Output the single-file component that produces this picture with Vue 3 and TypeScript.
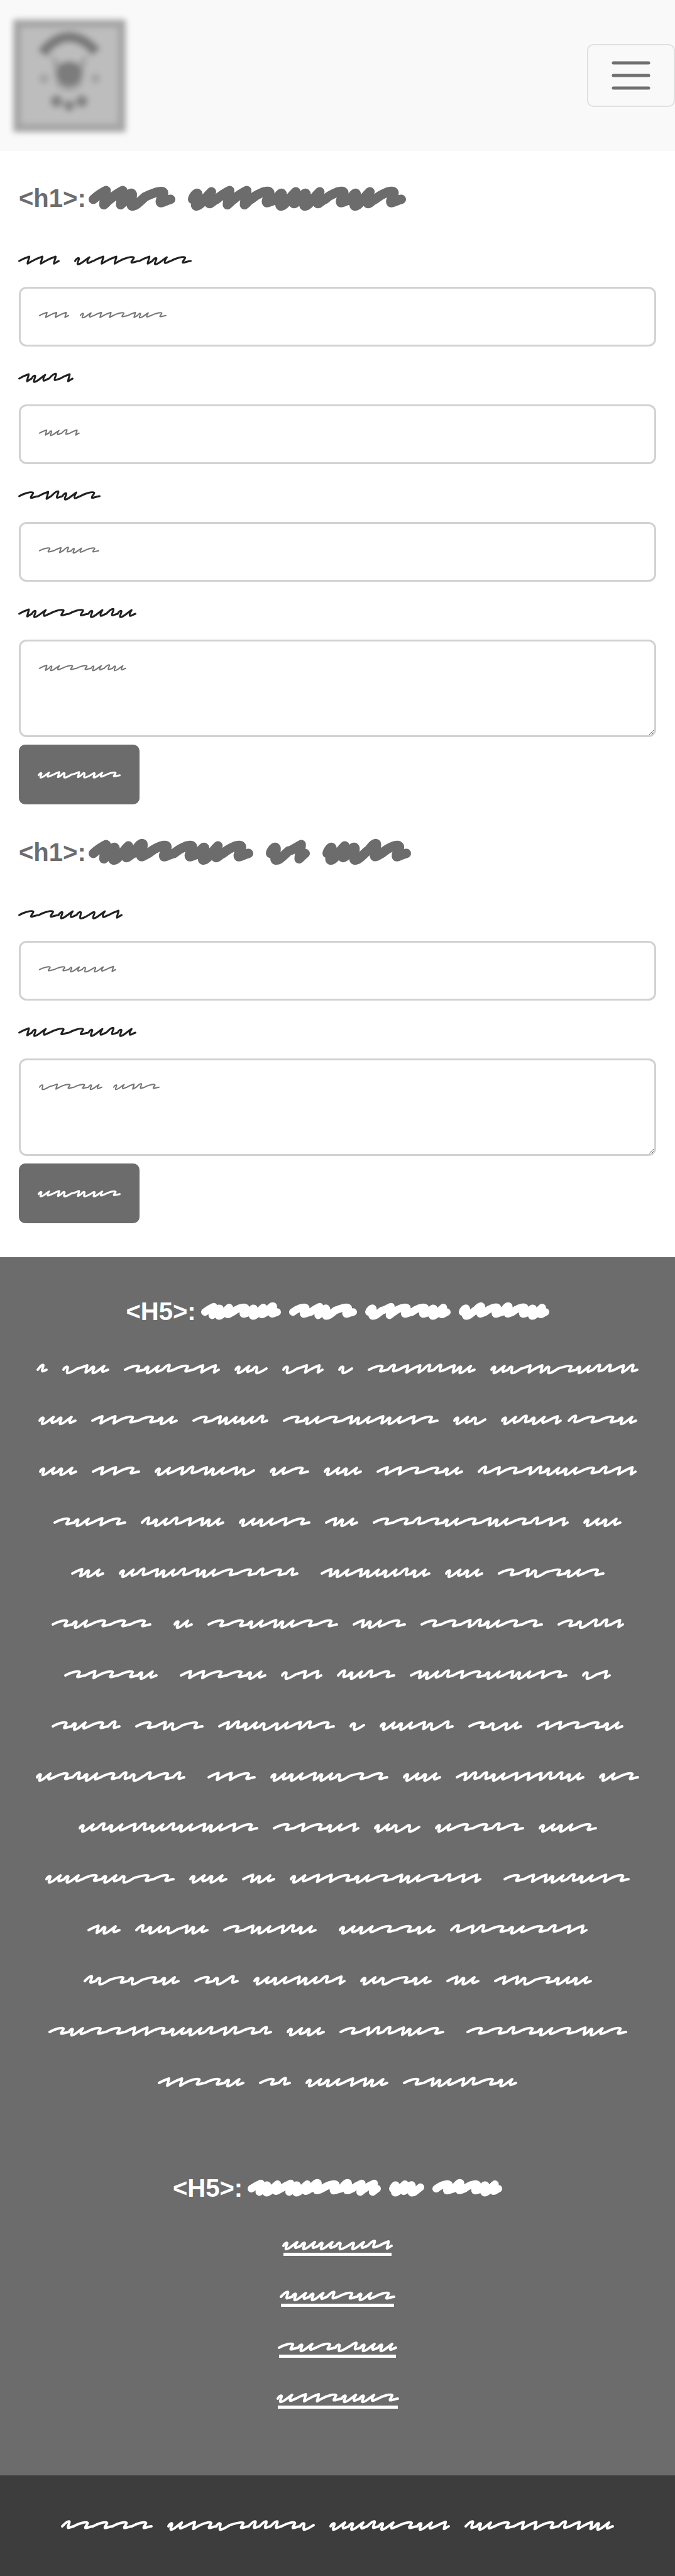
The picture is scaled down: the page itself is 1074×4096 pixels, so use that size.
<script setup lang="ts">
import { defineComponent, h } from 'vue'

type Point = number[]
interface Stroke { width: number; curves: Point[] }

// Pen movements of the scribble lettering. Each curve is a cubic segment
// (x1, y1, x2, y2, x, y) measured from the start of its letter.
const strokes: Record<string, Stroke> = {
  n: { width: 30, curves: [[5, -1, 14, -4, 23, -6], [24, -5, 18, 4, 19, 5.3], [21, 5, 25, 2.4, 30, 1]] },
  i: { width: 27, curves: [[3, -1, 12, -8, 17, -6.6], [19, -5, 11, 2, 14, 3.4], [16, 4, 21, 2, 27, 1]] },
  r: { width: 46, curves: [[10, -3, 29, -7, 33, -4.6], [35, -3, 25, 2, 28, 3.6], [30, 4, 38, 1.6, 46, 1]] },
  u: { width: 42, curves: [[1, -1.4, 8, -5.4, 9, -3.2], [10, -1, 3, 5, 6, 6.2], [13, 7, 23, -1, 33, -5], [32, -4, 26, 2, 29, 4.2], [31, 5, 36, 2, 42, 1]] },
  v: { width: 33, curves: [[1, -1.4, 8, -5.4, 10, -3.2], [11, -1, 6, 5, 9, 6.2], [15, 7, 23, 3, 33, -1]] },
}

const unit = 0.685

function trace(code: string, width: number, pen: number, rise: number): string {
  const letters = code.split('').map((c) => strokes[c])
  const total = letters.reduce((sum, l) => sum + l.width, 0)
  const k = (width - pen) / total
  const mid = 12
  let x = 0
  let d = `M${pen / 2} ${mid + rise}`
  for (const letter of letters) {
    for (const c of letter.curves) {
      const pts = c.map((v, n) => (n % 2 === 0 ? pen / 2 + (x + v) * k : mid + v * rise).toFixed(1))
      d += ` C${pts.join(' ')}`
    }
    x += letter.width
  }
  return d
}

// Draws a line of scribbled words. A word is written "letters:width";
// a leading "+" widens the gap before it and "-" tightens it.
const Scribble = defineComponent({
  props: {
    words: { type: String, required: true },
    pen: { type: Number, default: 4 },
    rise: { type: Number, default: 1 },
  },
  setup(props) {
    return () =>
      h('span', { class: 'scribble', 'aria-hidden': 'true' }, props.words.split(' ').map((word) => {
        const wide = word[0] === '+'
        const tight = word[0] === '-'
        const [code, size] = word.replace(/^[+-]/, '').split(':')
        const width = Math.round(Number(size) * unit)
        return h('svg', { class: { word: true, wide, tight }, width, height: 24, viewBox: `0 0 ${width} 24` }, [
          h('path', { d: trace(code, width, props.pen, props.rise), 'stroke-width': props.pen }),
        ])
      }))
  },
})

interface Field { id: string; label: string; hint: string; area?: boolean }
interface Form { id: string; title: string; fields: Field[]; submit: string }

const forms: Form[] = [
  {
    id: 'first',
    title: 'nnvr:202 unnruurur:506',
    submit: 'unvnvur:192',
    fields: [
      { id: 'a1', label: 'nnn:96 unnrnur:273', hint: 'nnn:70 unnrnur:202' },
      { id: 'a2', label: 'nuin:129', hint: 'nuin:95' },
      { id: 'a3', label: 'rniur:191', hint: 'rniur:140' },
      { id: 'a4', label: 'nurruiu:275', hint: 'nurruiu:203', area: true },
    ],
  },
  {
    id: 'second',
    title: 'nuirrur:382 vn:102 uvir:206',
    submit: 'unvnvur:192',
    fields: [
      { id: 'b1', label: 'rruvun:242', hint: 'rruvun:179' },
      { id: 'b2', label: 'nurruiu:275', hint: 'vnrru:148 unir:108', area: true },
    ],
  },
]

const about = [
  'i:26 vnu:109 ruirnn:223 uv:78 vnn:97 v:35 rinniinu:251 uvnnvruiini:345',
  'uu:89 nnrru:201 rnuui:177 rurnununr:362 uv:78 uiun:142 -irru:162',
  'uu:89 nnr:113 uninunv:233 ur:92 uu:89 nnrru:202 inrniuurinn:369',
  'runr:170 iuinnu:194 uunr:166 nu:77 rrirurnurinn:456 uu:89',
  'nu:78 uinuinurriri:418 +nunuuiu:256 uu:89 rnvrur:248',
  'rurrr:232 +u:45 rrunurr:304 nur:124 rrniurr:285 rviin:155',
  'rnrru:217 +nnrru:201 vnn:97 iuir:136 nuinrununr:367 vn:67',
  'ruri:161 rnvr:159 niuvunir:271 v:36 uunvi:172 rvu:125 nnrru:202',
  'uriuriviri:347 +nnr:113 uunuvrr:274 uu:89 niiunnniiu:299 ur:93',
  'uiuniuiununr:418 rnrun:201 uvv:108 urrir:208 uur:136',
  'uuruvrr:300 uu:89 nu:77 unnrurnurinn:445 +rnnuiunr:294',
  'nu:78 iuvnu:171 rnuniu:218 +uurru:225 inirurinn:319',
  'ivrvru:223 rvi:103 uunuin:214 uvru:167 nu:77 nnvruu:228',
  'rurrnnruuiniri:520 uu:89 rniinur:244 +rrirurnur:373',
  'nnrru:201 ri:74 uunnu:192 rnuniru:265',
]

const links = ['uuuvuin:257', 'iuuirur:268', 'rurviuu:277', 'unnruur:285']
</script>

<template>
  <div class="page">
    <header class="bar">
      <a href="#" class="brand">
        <svg width="179" height="179" viewBox="0 0 179 179" aria-hidden="true">
          <defs>
            <filter id="soft" x="-20%" y="-20%" width="140%" height="140%">
              <feGaussianBlur stdDeviation="5" />
            </filter>
          </defs>
          <g filter="url(#soft)">
            <rect width="179" height="179" fill="#a6a6a6" />
            <rect x="13" y="13" width="153" height="153" fill="#bdbdbd" />
            <path d="M46 54Q66 28 89 28T132 52" fill="none" stroke="#7a7a7a" stroke-width="17" />
            <path d="M60 54L78 72H100L118 54L110 104Q89 124 68 104Z" fill="#a2a2a2" />
            <circle cx="89" cy="86" r="20" fill="#7c7c7c" />
            <circle cx="49" cy="94" r="8" fill="#a4a4a4" />
            <circle cx="131" cy="94" r="8" fill="#a4a4a4" />
            <circle cx="69" cy="130" r="10" fill="#848484" />
            <circle cx="89" cy="137" r="9" fill="#848484" />
            <circle cx="109" cy="130" r="10" fill="#848484" />
          </g>
        </svg>
      </a>
      <button type="button" class="toggler">
        <svg width="76" height="76" viewBox="0 0 76 76" aria-hidden="true">
          <path d="M10 18H66M10 38H66M10 58H66" stroke="#707070" stroke-width="5" stroke-linecap="round" />
        </svg>
      </button>
    </header>

    <main>
      <form v-for="form in forms" :key="form.id" @submit.prevent>
        <h1>&lt;h1&gt;:<Scribble class="title" :words="form.title" :pen="15" :rise="2" /></h1>
        <div v-for="field in form.fields" :key="field.id" class="field">
          <label :for="field.id"><Scribble :words="field.label" :pen="3" /></label>
          <div class="control">
            <textarea v-if="field.area" :id="field.id"></textarea>
            <input v-else :id="field.id" type="text" />
            <Scribble class="hint" :words="field.hint" :pen="2" :rise="0.7" />
          </div>
        </div>
        <button type="submit" class="submit"><Scribble :words="form.submit" :pen="3" :rise="0.7" /></button>
      </form>
    </main>

    <section class="info">
      <h5>&lt;H5&gt;:<Scribble class="title" words="nurui:186 rnvr:157 vnrru:199 viriru:210" :pen="12" :rise="1.2" /></h5>
      <p>
        <Scribble v-for="line in about" :key="line" class="line" :words="line" />
      </p>
      <h5>&lt;H5&gt;:<Scribble class="title" words="nunuirinn:310 uv:82 riru:162" :pen="12" :rise="1.2" /></h5>
      <ul>
        <li v-for="link in links" :key="link">
          <a href="#"><Scribble :words="link" /></a>
        </li>
      </ul>
    </section>

    <footer>
      <Scribble words="irrrr:213 unrvriiirv:343 uuiurun:281 iurnnrinnu:348" />
    </footer>
  </div>
</template>

<style>
body {
  margin: 0;
  background: #ffffff;
}

.scribble {
  display: inline-flex;
  gap: 23px;
}

.scribble .word {
  display: block;
  flex: none;
  overflow: visible;
  fill: none;
  stroke: currentColor;
  stroke-linecap: round;
  stroke-linejoin: round;
}

.scribble .wide {
  margin-left: 12px;
}

.scribble .tight {
  margin-left: -14px;
}
</style>

<style scoped>
.page {
  font-family: "Liberation Sans", Arial, sans-serif;
  color: #212121;
}

.bar {
  display: flex;
  align-items: center;
  justify-content: space-between;
  height: 240px;
  padding-left: 21px;
  background: #f9f9f9;
}

.brand svg {
  display: block;
  overflow: visible;
}

.toggler {
  display: flex;
  align-items: center;
  justify-content: center;
  box-sizing: border-box;
  width: 140px;
  height: 100px;
  padding: 0;
  border: 2px solid #e0e0e0;
  border-radius: 10px;
  background: none;
}

main {
  padding: 51px 30px 54px;
}

form + form {
  margin-top: 52px;
}

h1,
h5 {
  display: flex;
  align-items: center;
  margin: 0;
  font-size: 40px;
  line-height: 48px;
  font-weight: 700;
}

h1 {
  margin-bottom: 63px;
  color: #6c6c6c;
}

h1 .title {
  gap: 20px;
  margin-left: 4px;
}

.field + .field {
  margin-top: 38px;
}

label {
  display: flex;
  margin: 0 -1px 30px;
}

.control {
  position: relative;
}

input,
textarea {
  display: block;
  box-sizing: border-box;
  width: 100%;
  height: 95px;
  padding: 15px 30px;
  border: 3px solid #d2d2d2;
  border-radius: 12px;
  background: #ffffff;
  font: inherit;
  font-size: 32px;
}

textarea {
  height: 155px;
  resize: vertical;
}

.hint {
  position: absolute;
  top: 33px;
  left: 32px;
  gap: 17px;
  color: #757575;
  pointer-events: none;
}

.submit {
  display: flex;
  align-items: center;
  height: 95px;
  margin-top: 12px;
  padding: 0 30px;
  border: 0;
  border-radius: 10px;
  background: #6c6c6c;
  color: #ffffff;
}

.info {
  padding: 62px 30px 82px;
  background: #6c6c6c;
  color: #ffffff;
}

h5 {
  justify-content: center;
  margin-bottom: 27px;
}

h5 .title {
  gap: 13px;
  margin-left: 8px;
}

p {
  display: flex;
  flex-direction: column;
  margin: 0 0 104px;
}

.line {
  align-items: center;
  justify-content: center;
  height: 81px;
}

ul {
  margin: 0;
  padding: 0;
  list-style: none;
}

li {
  display: flex;
  justify-content: center;
  padding: 28px 0 24px;
}

li a {
  display: flex;
  border-bottom: 5px solid #ffffff;
  color: #ffffff;
}

li .scribble {
  margin: 0 -2px;
}

footer {
  display: flex;
  align-items: center;
  justify-content: center;
  height: 160px;
  padding-bottom: 0;
  background: #3d3d3d;
  color: #ffffff;
}
</style>
